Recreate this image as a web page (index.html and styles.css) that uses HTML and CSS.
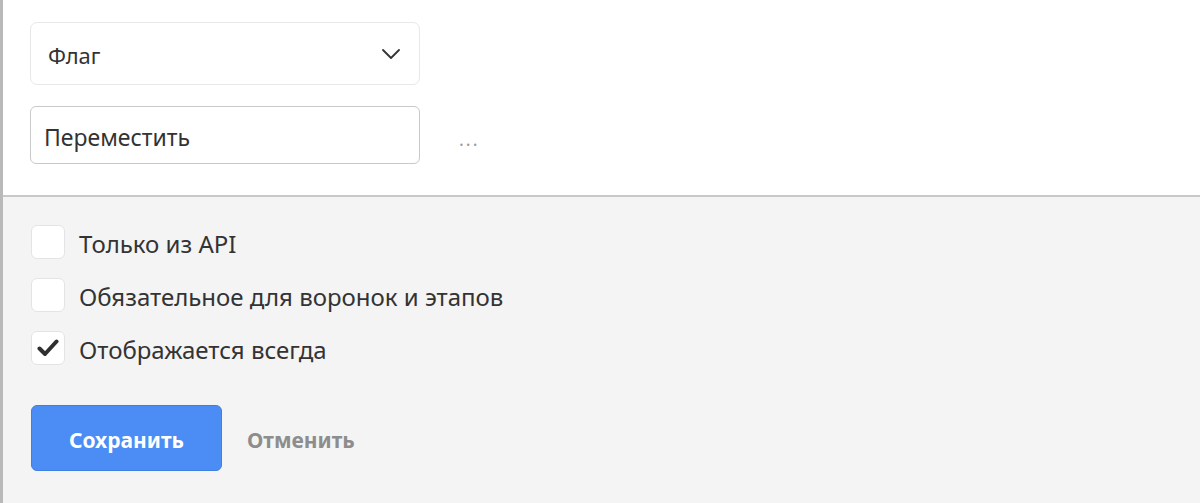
FILE: index.html
```
<!DOCTYPE html>
<html lang="ru">
<head>
<meta charset="utf-8">
<link rel="stylesheet" href="styles.css">
</head>
<body>
<div class="page">
  <section class="top">
    <div class="select">
      <span class="select-text">Флаг</span>
      <svg class="chevron" width="18" height="10" viewBox="0 0 18 10"><path d="M1 1 L9 9 L17 1" fill="none" stroke="#333" stroke-width="1.8" stroke-linecap="round" stroke-linejoin="round"/></svg>
    </div>
    <div class="input-row">
      <div class="input">Переместить</div>
      <span class="dots">...</span>
    </div>
  </section>
  <section class="bottom">
    <div class="checks">
      <label class="check"><span class="box"></span><span class="label">Только из API</span></label>
      <label class="check"><span class="box"></span><span class="label">Обязательное для воронок и этапов</span></label>
      <label class="check"><span class="box"><svg width="22" height="18" viewBox="0 0 22 18"><path d="M2.5 9.5 L8 15 L19.5 2.5" fill="none" stroke="#2f2f2f" stroke-width="4" stroke-linecap="round" stroke-linejoin="round"/></svg></span><span class="label">Отображается всегда</span></label>
    </div>
    <div class="actions">
      <button class="btn-save">Сохранить</button>
      <button class="btn-cancel">Отменить</button>
    </div>
  </section>
</div>
</body>
</html>
```
FILE: styles.css
```
html, body {
  margin: 0;
  padding: 0;
  height: 100%;
}
body {
  font-family: "Noto Sans", "Open Sans", sans-serif;
  color: #333;
  background: #f4f4f4;
}
.page {
  border-left: 3px solid #b9b9b9;
  min-height: 100%;
  box-sizing: border-box;
  display: flex;
  flex-direction: column;
}
.top {
  background: #fff;
  padding: 22px 0 31px 27px;
  border-bottom: 2px solid #c8c8c8;
  display: flex;
  flex-direction: column;
  gap: 21px;
}
.select {
  width: 390px;
  height: 63px;
  box-sizing: border-box;
  border: 1px solid #e8e8e8;
  border-radius: 7px;
  display: flex;
  align-items: center;
  justify-content: space-between;
  padding: 0 19px 0 17px;
}
.select-text {
  font-size: 22px;
  padding-top: 3px;
}
.input-row {
  display: flex;
  align-items: center;
  gap: 39px;
}
.input {
  width: 390px;
  height: 58px;
  box-sizing: border-box;
  border: 1px solid #c9c9c9;
  border-radius: 6px;
  display: flex;
  align-items: center;
  padding: 3px 0 0 13px;
  font-size: 23px;
}
.dots {
  color: #9a9a9a;
  font-size: 18px;
  letter-spacing: 2px;
  padding-top: 8px;
}
.bottom {
  flex: 1;
  background: #f4f4f4;
  padding: 28px 0 0 28px;
}
.checks {
  display: flex;
  flex-direction: column;
  gap: 19px;
}
.check {
  display: flex;
  align-items: center;
  gap: 14px;
  height: 34px;
}
.box {
  width: 34px;
  height: 34px;
  box-sizing: border-box;
  background: #fff;
  border: 1px solid #e4e4e4;
  border-radius: 6px;
  display: flex;
  align-items: center;
  justify-content: center;
}
.label {
  font-size: 24px;
  padding-top: 3px;
}
.actions {
  margin-top: 40px;
  display: flex;
  align-items: center;
  gap: 25px;
}
.btn-save {
  width: 191px;
  height: 66px;
  background: #4b8cf5;
  border: 1px solid #3f7ee2;
  border-radius: 6px;
  color: #fff;
  font-family: "Noto Sans", "Open Sans", sans-serif;
  font-weight: 700;
  font-size: 21px;
  padding: 3px 0 0;
}
.btn-cancel {
  background: none;
  border: none;
  padding: 3px 0 0;
  color: #8d8d8d;
  font-family: "Noto Sans", "Open Sans", sans-serif;
  font-weight: 700;
  font-size: 21px;
}
```
